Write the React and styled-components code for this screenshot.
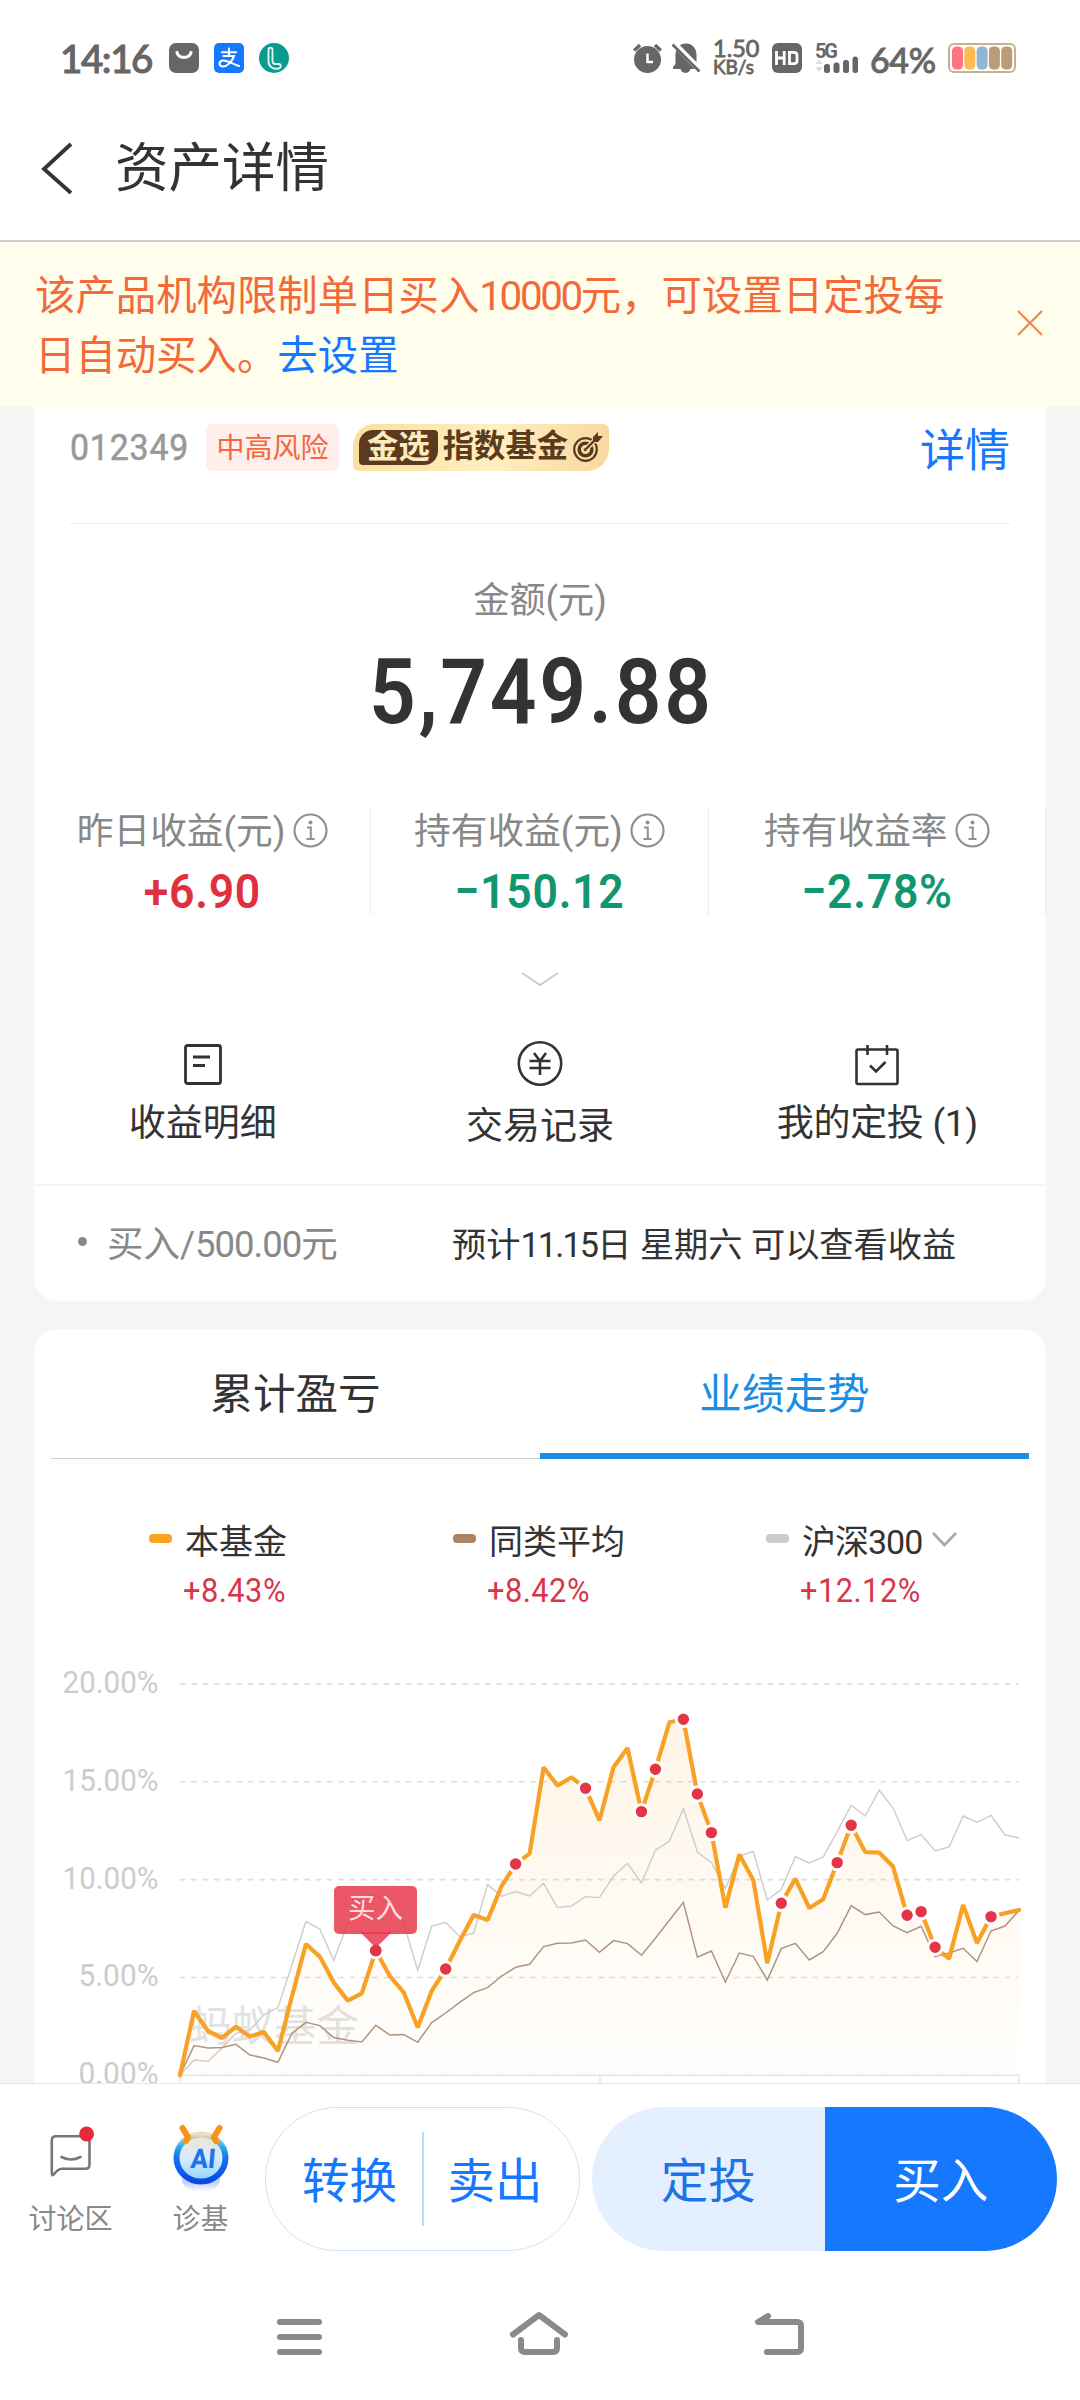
import React from 'react';
import styled, { createGlobalStyle } from 'styled-components';

const GlobalStyle = createGlobalStyle`
  * {
    box-sizing: border-box;
  }
  body {
    margin: 0;
    background: #fff;
    font-family: Roboto, 'Noto Sans CJK SC', sans-serif;
    color: #333;
  }
  svg {
    display: block;
    flex: none;
  }
`;

const Screen = styled.div`
  width: 1080px;
  height: 2400px;
  display: flex;
  flex-direction: column;
  overflow: hidden;
  background: #fff;
  white-space: nowrap;
`;

/* status bar */

const StatusBar = styled.div`
  height: 95px;
  padding: 20px 64px 0 60px;
  display: flex;
  align-items: center;
  color: #666;
  font-family: Lato, sans-serif;
`;

const Clock = styled.div`
  width: 109px;
  font-size: 38.5px;
  font-weight: 500;
  line-height: 38px;
  letter-spacing: -1.4px;
  -webkit-text-stroke: 1px #666;
`;

const AppIcons = styled.div`
  display: flex;
  gap: 15px;
  flex: 1;
`;

const StatusGroup = styled.div`
  display: flex;
  align-items: center;
`;

const NetSpeed = styled.div`
  width: 69px;
  padding-left: 10px;
  font-size: 23.5px;
  line-height: 18px;
  -webkit-text-stroke: 0.8px #666;
  span {
    display: block;
    font-size: 19px;
    line-height: 19px;
  }
`;

const Battery = styled.div`
  width: 89px;
  padding: 4px 0 0 11px;
  font-size: 34px;
  font-weight: 500;
  line-height: 34px;
  letter-spacing: -0.4px;
  -webkit-text-stroke: 0.8px #666;
`;

/* header */

const Header = styled.div`
  height: 147px;
  padding: 0 0 0 40px;
  display: flex;
  align-items: center;
  gap: 41px;
  border-bottom: 2px solid #cfcfcf;
`;

const Title = styled.div`
  padding-top: 3px;
  font-size: 53.5px;
  line-height: 60px;
`;

const Notice = styled.div`
  height: 165px;
  padding: 25px 37px 0 35px;
  display: flex;
  justify-content: space-between;
  background: #fffdec;
  color: #f26a3a;
  font-size: 40.4px;
  line-height: 60px;
  svg {
    margin-top: 43px;
  }
`;

const Condensed = styled.span`
  letter-spacing: ${(p) => p.$by || -1}px;
`;

const Link = styled.span`
  color: #1677ff;
`;

/* page body */

const Body = styled.div`
  height: 1676px;
  padding: 0 34px;
  overflow: hidden;
  background: #f5f5f5;
`;

const Card = styled.div`
  background: #fff;
  border-radius: ${(p) => (p.$top ? '24px 24px 0 0' : '0 0 24px 24px')};
  margin-bottom: 28px;
`;

const FundRow = styled.div`
  height: 117px;
  margin: 0 36px;
  padding-bottom: 36px;
  display: flex;
  align-items: center;
  border-bottom: 1px solid #ececec;
`;

const FundCode = styled.div`
  width: 136px;
  font-size: 37.5px;
  color: #999;
  letter-spacing: 1px;
  transform: scaleX(0.9);
  transform-origin: left;
  -webkit-text-stroke: 0.6px #999;
`;

const RiskTag = styled.div`
  width: 133px;
  height: 47px;
  border-radius: 6px;
  background: #ffeeeb;
  color: #f2683a;
  font-size: 28px;
  line-height: 49px;
  text-align: center;
`;

const GoldBadge = styled.div`
  width: 256px;
  height: 47px;
  margin-left: 14px;
  padding: 0 6px;
  display: flex;
  align-items: center;
  gap: 5px;
  border-radius: 22px 6px 22px 6px;
  background: linear-gradient(100deg, #fbdf9e, #ffefc0 55%, #f9d79d);
  color: #5b3a20;
  font-size: 31.3px;
  line-height: 44px;
  font-weight: 700;
`;

const GoldMark = styled.span`
  width: 79px;
  height: 35px;
  border-radius: 14px 4px 14px 4px;
  background: #5b3a20;
  color: #fdebbd;
  line-height: 35px;
  text-align: center;
`;

const DetailLink = styled.div`
  margin-left: auto;
  color: #1677ff;
  font-size: 45px;
`;

const AmountLabel = styled.div`
  margin-top: 52px;
  font-size: 36.2px;
  line-height: 50px;
  text-align: center;
  color: #888;
`;

const Amount = styled.div`
  margin-top: 21px;
  padding-left: 3px;
  font-size: 91px;
  font-weight: 600;
  line-height: 90px;
  letter-spacing: 3px;
  text-align: center;
  transform: scaleX(0.9);
`;

const Stats = styled.div`
  height: 104px;
  margin-top: 72px;
  display: grid;
  grid-template-columns: repeat(3, 1fr);
`;

const Stat = styled.div`
  padding-top: 3px;
  border-right: 1px solid #ececec;
  display: flex;
  flex-direction: column;
  align-items: center;
`;

const StatLabel = styled.div`
  display: flex;
  align-items: center;
  gap: 7px;
  font-size: 36.7px;
  line-height: 40px;
  color: #888;
  svg {
    margin-top: -4px;
  }
`;

const StatValue = styled.div`
  margin-top: 17px;
  font-size: 49px;
  font-weight: 600;
  line-height: 46px;
  letter-spacing: 0.8px;
  transform: scaleX(0.91);
  color: ${(p) => (p.$up ? '#e0303f' : '#109770')};
`;

const Expander = styled.div`
  margin-top: 59px;
  display: flex;
  justify-content: center;
`;

const Actions = styled.div`
  height: 143px;
  margin-top: 54px;
  display: grid;
  grid-template-columns: repeat(3, 1fr);
`;

const Action = styled.div`
  display: flex;
  flex-direction: column;
  align-items: center;
  gap: ${(p) => p.$gap || 17}px;
  font-size: 37px;
  line-height: 40px;
`;

const Pending = styled.div`
  height: 117px;
  padding: 0 0 4px 44px;
  display: flex;
  align-items: center;
  border-top: 2px solid #f5f5f5;
`;

const Bullet = styled.span`
  width: 9px;
  height: 9px;
  border-radius: 50%;
  background: #888;
`;

const PendingName = styled.div`
  width: 365px;
  padding-left: 20px;
  font-size: 36.5px;
  color: #888;
`;

const PendingNote = styled.div`
  font-size: 34.2px;
`;

/* performance card */

const Tabs = styled.div`
  height: 130px;
  margin: 0 17px;
  display: grid;
  grid-template-columns: 1fr 1fr;
`;

const Tab = styled.div`
  display: flex;
  justify-content: center;
  font-size: 42.6px;
  line-height: 130px;
  color: ${(p) => (p.$active ? '#1a8ee2' : '#333')};
  box-shadow: inset 0 ${(p) => (p.$active ? '-6px #1a8ee2' : '-1px #d0d0d0')};
`;

const Legend = styled.div`
  margin-top: 62px;
  padding-left: 115px;
  display: grid;
  grid-template-columns: 304px 313px auto;
`;

const LegendName = styled.div`
  display: flex;
  align-items: center;
  gap: 13px;
  font-size: 34px;
  line-height: 42px;
  height: 41px;
  &::before {
    content: '';
    width: 23px;
    height: 9px;
    margin-bottom: 6px;
    border-radius: 4px;
    background: ${(p) => p.$color};
  }
  svg {
    margin: 0 0 4px -3px;
  }
`;

const LegendValue = styled.div`
  margin-top: 9px;
  margin-left: 34px;
  font-size: 33.5px;
  line-height: 40px;
  letter-spacing: 0.5px;
  transform: scaleX(0.92);
  transform-origin: left;
  color: #d9364a;
`;

const ChartSvg = styled.svg`
  margin-top: 9px;
  font-size: 31px;
`;

/* bottom bar */

const BottomBar = styled.div`
  height: 169px;
  padding: 23px 23px 0 0;
  display: flex;
  border-top: 1px solid #e6e6e6;
`;

const Shortcut = styled.div`
  width: ${(p) => p.$width}px;
  display: flex;
  flex-direction: column;
  align-items: center;
  justify-content: space-between;
  padding: 14px 0 12px;
  font-size: 28px;
  line-height: 40px;
  color: #888;
`;

const OutlinePill = styled.div`
  width: 315px;
  height: 144px;
  margin: 0 12px 0 5px;
  display: flex;
  align-items: center;
  border: 1px solid #cfe2fa;
  border-radius: 72px;
  color: #1677ff;
  font-size: 47.500px;
`;

const PillItem = styled.div`
  flex: 1;
  height: 94px;
  line-height: 100px;
  text-align: center;
  & + & {
    padding-right: 13px;
    border-left: 2px solid #bdd8fb;
  }
  &:first-child {
    flex: none;
    width: 156px;
    padding-left: 11px;
  }
`;

const SolidPill = styled.div`
  flex: 1;
  height: 144px;
  display: flex;
  border-radius: 72px;
  overflow: hidden;
  font-size: 47.500px;
  line-height: 151px;
  text-align: center;
`;

const SolidItem = styled.div`
  flex: 1;
  background: ${(p) => (p.$primary ? '#1677ff' : '#e4efff')};
  color: ${(p) => (p.$primary ? '#fff' : '#1c74e6')};
`;

const NavBar = styled.div`
  flex: 1;
  padding: 58px 272px 0 274px;
  display: flex;
  justify-content: space-between;
`;

/* icons */

const BagIcon = () => (
  <svg width="30" height="30">
    <rect width="30" height="30" rx="7" fill="#666" />
    <path d="M8 9.5c1.5 6.500 12.500 6.500 14 0" fill="none" stroke="#fff" strokeWidth="3.200" strokeLinecap="round" />
  </svg>
);

const PayIcon = () => (
  <svg width="30" height="30" fill="none" stroke="#fff" strokeLinecap="round">
    <rect width="30" height="30" rx="5" fill="#1677ff" stroke="none" />
    <path d="M8 9.200h14M15 5.500v7.500M9.500 13h10.500c-1.500 5-6.500 10.500-11 10.500c-5 0-4.500-6 0.500-6c4.500 0 9 3.500 15.500 5.500" strokeWidth="2.100" />
  </svg>
);

const CallIcon = () => (
  <svg width="30" height="30" fill="none" stroke="#dff5f2" strokeWidth="1.900">
    <circle cx="15" cy="15" r="15" fill="#0a9b90" stroke="none" />
    <path d="M9.500 7c0-3 4-3 4 0v11c0 2 1 3 3 3h3c3 0 3 4 0 4.500c-6 1-10-2-10-7z" />
  </svg>
);

const AlarmIcon = () => (
  <svg width="29" height="30" fill="none" stroke="#666">
    <circle cx="14.500" cy="16.500" r="13.500" fill="#666" stroke="none" />
    <path d="M1.200 7.500L7 2M27.800 7.500L22 2" strokeWidth="3.400" />
    <path d="M14.500 10.500v8.500h5.500" stroke="#fff" strokeWidth="2.400" />
  </svg>
);

const MuteIcon = () => (
  <svg width="41" height="30">
    <path d="M11 26v-2l2.500-3v-9C13.500 5 18 0.500 24 0.500S34.500 5 34.500 12v9l2.500 3v2z" fill="#666" />
    <path d="M18.500 25h10a5 5 0 0 1-10 0z" fill="#666" />
    <path d="M11.500 0L39 28" stroke="#fff" strokeWidth="6" />
    <path d="M10.500 1.500L37.500 28.500" stroke="#666" strokeWidth="2.600" />
  </svg>
);

const HdIcon = () => (
  <svg width="30" height="30" fill="none" stroke="#fff" strokeWidth="2.800">
    <rect width="30" height="30" rx="6" fill="#666" stroke="none" />
    <path d="M4.500 8v14M12.200 8v14M4.500 15h8M17.500 9.300h4.500q3 0 3 3v5.400q0 3-3 3h-4.500z" />
  </svg>
);

const SignalIcon = () => (
  <svg width="57" height="40" viewBox="0 -4 57 40">
    <text x="13" y="15.500" fontSize="20" fontWeight="700" fill="#666" textLength="23" fontFamily="Roboto, sans-serif">5G</text>
    <path d="M13 22l4-4 4 4zM13 25l4 5 4-5z" fill="#ddd" />
    <g fill="#666">
      <rect x="22" y="22" width="6" height="9" rx="2.500" />
      <rect x="31.500" y="20.500" width="6" height="10.500" rx="2.500" />
      <rect x="41" y="18" width="6" height="13" rx="2.500" />
      <rect x="50.500" y="14.500" width="5.500" height="16.500" rx="2.500" />
    </g>
  </svg>
);

const BatteryIcon = () => (
  <svg width="68" height="30">
    <rect x="1" y="1" width="66" height="28" rx="5" fill="#fff" stroke="#c9b08c" strokeWidth="2" />
    {['#ff7480', '#fbbd52', '#93b4d2', '#bb9b78', '#bb9b78'].map((color, i) => (
      <rect key={i} x={4 + i * 12.3} y="3.500" width="11" height="23" rx="4.500" fill={color} />
    ))}
  </svg>
);

const BackIcon = () => (
  <svg width="34" height="52" fill="none" stroke="#333" strokeWidth="3.800">
    <path d="M31 2L4 27l27 24" />
  </svg>
);

const CloseIcon = () => (
  <svg width="26" height="26" stroke="#ea8a50" strokeWidth="2.200">
    <path d="M1 1l24 24M25 1L1 25" />
  </svg>
);

const TargetIcon = () => (
  <svg width="30" height="32" fill="none" stroke="#5b3a20" strokeWidth="2.200">
    <circle cx="12.500" cy="18.500" r="11.300" />
    <circle cx="12.500" cy="18.500" r="6.300" strokeWidth="3.600" />
    <circle cx="12.500" cy="18.500" r="1.800" fill="#5b3a20" stroke="none" />
    <path d="M12.500 18.500L23 8" stroke="#fbe3ae" strokeWidth="5" />
    <path d="M12.500 18.500L24 7" strokeWidth="2.400" />
    <path d="M20 6l5-5v4l5 0-5 6h-5z" fill="#5b3a20" stroke="none" />
  </svg>
);

const InfoIcon = () => (
  <svg width="35" height="35" fill="none" stroke="#909090" strokeWidth="2.200">
    <circle cx="17.500" cy="17.500" r="16" />
    <circle cx="17.500" cy="9.500" r="2" fill="#909090" stroke="none" />
    <path d="M14 14.500h3.800v11M13.500 26h8" strokeWidth="2" />
  </svg>
);

const ChevronDown = ({ width = 38, height = 15, color = '#ccc', stroke = 2 }) => (
  <svg width={width} height={height} fill="none" stroke={color} strokeWidth={stroke}>
    <path d={`M1 1L${width / 2} ${height - 2}L${width - 1} 1`} />
  </svg>
);

const ReceiptIcon = () => (
  <svg width="46" height="46" fill="none" stroke="#333" strokeWidth="2.800">
    <rect x="5.500" y="4.500" width="35" height="38" rx="2" />
    <path d="M13 16h17M13 24.500h12" />
  </svg>
);

const YenIcon = () => (
  <svg width="46" height="46" fill="none" stroke="#333" strokeWidth="2.600">
    <circle cx="23" cy="22.500" r="21.200" />
    <path d="M17 12l6 8 6-8M12.500 20h21M12.500 27h21M23 20v14" />
  </svg>
);

const CalendarIcon = () => (
  <svg width="46" height="46" fill="none" stroke="#333" strokeWidth="2.600">
    <rect x="2.500" y="8.500" width="41" height="34.500" rx="1.500" />
    <path d="M13.500 4v10M33 4v10M16 24.500l6 6 9.500-9.500" />
  </svg>
);

const DiscussIcon = () => (
  <svg width="52" height="58" fill="none" stroke="#777" strokeWidth="2.600" strokeLinejoin="round">
    <path d="M11 15.300h29.500q4 0 4 4v24.400q0 4-4 4H17q-4 0-8 5.500q-2.200 2.500-2.200-1V19.300q0-4 4.200-4z" />
    <path d="M16.500 36q9.500 5 19 0" strokeLinecap="round" />
    <circle cx="41.600" cy="13" r="7.400" fill="#e6293b" stroke="none" />
  </svg>
);

const AiIcon = () => (
  <svg width="60" height="76" fill="none">
    <defs>
      <linearGradient id="ring" x1="0" y1="0" x2="0" y2="1">
        <stop offset="0" stopColor="#f0dcbc" />
        <stop offset="0.250" stopColor="#35aee6" />
        <stop offset="0.500" stopColor="#1673f2" />
        <stop offset="1" stopColor="#0a48e8" />
      </linearGradient>
      <linearGradient id="face" x1="0" y1="0" x2="0" y2="1">
        <stop offset="0" stopColor="#f3e4cc" />
        <stop offset="0.500" stopColor="#d6ecfb" />
        <stop offset="1" stopColor="#8fd2ff" />
      </linearGradient>
      <linearGradient id="shade" x1="0" y1="0" x2="0" y2="1">
        <stop offset="0.600" stopColor="#c5cffb" />
        <stop offset="1" stopColor="#fff" />
      </linearGradient>
    </defs>
    <ellipse cx="30" cy="59" rx="19" ry="12" fill="url(#shade)" />
    <ellipse cx="30" cy="37" rx="24.500" ry="23.500" fill="url(#face)" stroke="url(#ring)" strokeWidth="6" />
    <path d="M11.500 7l5.500 9-2 4M48.500 7l-5.500 9 2 4" stroke="#fb9312" strokeWidth="6" strokeLinecap="round" strokeLinejoin="round" />
    <text x="19" y="47" fontSize="27" fontWeight="800" fill="#1d74f0" textLength="25" lengthAdjust="spacingAndGlyphs" transform="translate(4 0) skewX(-5)">AI</text>
  </svg>
);

const MenuIcon = () => (
  <svg width="50" height="48" stroke="#8a8a8a" strokeWidth="6" strokeLinecap="round">
    <path d="M6 12h39M6 27h39M6 42h39" />
  </svg>
);

const HomeIcon = () => (
  <svg width="60" height="48" fill="none" stroke="#8a8a8a" strokeWidth="6" strokeLinecap="round" strokeLinejoin="round">
    <path d="M4 24.500L30 5l26 19.500M12 30v8q0 4 4 4h28q4 0 4-4v-8" />
  </svg>
);

const ReturnIcon = () => (
  <svg width="54" height="48" fill="none" stroke="#8a8a8a" strokeWidth="6" strokeLinecap="round" strokeLinejoin="round">
    <path d="M14 6L4 12h39q4 0 4 4v22q0 4-4 4H13" />
  </svg>
);

/* chart data, 58.7 units to one percent */

const fund = [
  0, 193, 133, 112, 146, 116, 130, 73, 236, 394, 356, 278, 224, 246, 374, 298, 249, 143, 253, 319,
  403, 481, 466, 568, 634, 665, 924, 869, 894, 861, 765, 924, 982, 791, 918, 1059, 1068, 844, 728, 503,
  662, 586, 336, 516, 590, 502, 528, 638, 750, 670, 668, 626, 480, 491, 384, 350, 511, 397, 476, 486, 496,
];
const peers = [
  0, 89, 82, 83, 93, 61, 52, 39, 126, 159, 149, 113, 105, 100, 150, 121, 122, 99, 158, 187,
  219, 248, 263, 298, 324, 333, 386, 396, 397, 406, 369, 404, 395, 360, 411, 465, 519, 354, 373, 280,
  367, 357, 286, 380, 396, 346, 371, 426, 509, 482, 490, 448, 428, 447, 356, 367, 381, 341, 433, 448, 494,
];
const csi300 = [
  0, 46, 42, 81, 126, 136, 181, 203, 331, 461, 439, 345, 456, 536, 541, 511, 456, 315, 448, 458,
  416, 426, 572, 537, 551, 538, 576, 503, 508, 536, 533, 598, 636, 577, 675, 703, 800, 670, 638, 561,
  658, 672, 526, 558, 656, 637, 655, 731, 810, 778, 855, 802, 704, 722, 673, 685, 778, 759, 780, 721, 712,
];
const buys = [14, 19, 24, 29, 33, 34, 36, 37, 38, 43, 47, 48, 52, 53, 54, 58];
const ticks = [0, 5, 10, 15, 20];

const LEFT = 146;
const RIGHT = 985;
const BASE = 455.3;
const px = (i) => LEFT + (i * (RIGHT - LEFT)) / 60;
const py = (v) => BASE - v / 3;
const line = (data) => data.map((v, i) => `${px(i).toFixed(1)},${py(v).toFixed(1)}`).join(' ');

const Chart = () => (
  <ChartSvg width="1012" height="463" fill="none">
    <defs>
      <linearGradient id="area" x1="0" y1="0" x2="0" y2="1">
        <stop offset="0" stopColor="#f9a01f" stopOpacity="0.110" />
        <stop offset="1" stopColor="#f9a01f" stopOpacity="0.010" />
      </linearGradient>
    </defs>
    <text x="155" y="421" fontSize="42.500" fill="#e2e2e2">蚂蚁基金</text>
    {ticks.map((t) => (
      <g key={t}>
        <text
          x="124.500"
          y={BASE - t * 19.57 + 9}
          textAnchor="end"
          fill="#ccc"
          textLength={t < 10 ? 80 : 96}
          lengthAdjust="spacingAndGlyphs"
        >
          {t.toFixed(2)}%
        </text>
        <path d={`M${LEFT} ${BASE - t * 19.57}H${RIGHT}`} stroke="#dedede" strokeWidth="1.600" strokeDasharray="5.500 5.800" />
      </g>
    ))}
    <path d={`M${LEFT} ${BASE}H${RIGHT}M${LEFT} ${BASE}v8M566 ${BASE}v8M${RIGHT} ${BASE}v8`} stroke="#e2e2e2" strokeWidth="1.300" />
    <polygon points={`${line(fund)} ${RIGHT},${BASE} ${LEFT},${BASE}`} fill="url(#area)" />
    <polyline points={line(csi300)} stroke="#ccc" strokeWidth="1.400" />
    <polyline points={line(peers)} stroke="#b09480" strokeWidth="1.500" />
    <polyline points={line(fund)} stroke="#f9a125" strokeWidth="4.200" strokeLinejoin="bevel" strokeLinecap="round" />
    {buys.map((i) => (
      <circle key={i} cx={px(i)} cy={py(fund[i])} r="7.200" fill="#e33546" stroke="#fff" strokeWidth="3" />
    ))}
    <g transform="translate(300 266)">
      <rect width="83" height="48" rx="5" fill="#e83a4c" fillOpacity="0.850" />
      <path d="M26 46h32L41.800 62z" fill="#e83a4c" fillOpacity="0.850" />
      <circle cx="41.800" cy="64.500" r="5.700" fill="#e33546" />
      <text x="14" y="32" fontSize="27.500" fill="#ffdde0">买入</text>
    </g>
  </ChartSvg>
);

const App = () => (
  <Screen>
    <GlobalStyle />
    <StatusBar>
      <Clock>14:16</Clock>
      <AppIcons>
        <BagIcon />
        <PayIcon />
        <CallIcon />
      </AppIcons>
      <StatusGroup>
        <AlarmIcon />
        <MuteIcon />
        <NetSpeed>
          1.50
          <span>KB/s</span>
        </NetSpeed>
        <HdIcon />
        <SignalIcon />
        <Battery>64%</Battery>
        <BatteryIcon />
      </StatusGroup>
    </StatusBar>
    <Header>
      <BackIcon />
      <Title>资产详情</Title>
    </Header>
    <Notice>
      <div>
        该产品机构限制单日买入<Condensed $by={-2.4}>10000</Condensed>元，可设置日定投每
        <br />
        日自动买入。<Link>去设置</Link>
      </div>
      <CloseIcon />
    </Notice>
    <Body>
      <Card>
        <FundRow>
          <FundCode>012349</FundCode>
          <RiskTag>中高风险</RiskTag>
          <GoldBadge>
            <GoldMark>金选</GoldMark>
            指数基金
            <TargetIcon />
          </GoldBadge>
          <DetailLink>详情</DetailLink>
        </FundRow>
        <AmountLabel>金额(元)</AmountLabel>
        <Amount>5,749.88</Amount>
        <Stats>
          <Stat>
            <StatLabel>昨日收益(元)<InfoIcon /></StatLabel>
            <StatValue $up>+6.90</StatValue>
          </Stat>
          <Stat>
            <StatLabel>持有收益(元)<InfoIcon /></StatLabel>
            <StatValue>−150.12</StatValue>
          </Stat>
          <Stat>
            <StatLabel>持有收益率<InfoIcon /></StatLabel>
            <StatValue>−2.78%</StatValue>
          </Stat>
        </Stats>
        <Expander>
          <ChevronDown />
        </Expander>
        <Actions>
          <Action>
            <ReceiptIcon />
            收益明细
          </Action>
          <Action $gap={20}>
            <YenIcon />
            交易记录
          </Action>
          <Action>
            <CalendarIcon />
            <Condensed $by={-0.3}>我的定投 (1)</Condensed>
          </Action>
        </Actions>
        <Pending>
          <Bullet />
          <PendingName>买入/<Condensed>500.00</Condensed>元</PendingName>
          <PendingNote>预计<Condensed $by={-1.8}>11.15</Condensed>日 星期六 可以查看收益</PendingNote>
        </Pending>
      </Card>
      <Card $top>
        <Tabs>
          <Tab>累计盈亏</Tab>
          <Tab $active>业绩走势</Tab>
        </Tabs>
        <Legend>
          <div>
            <LegendName $color="#fba31f">本基金</LegendName>
            <LegendValue>+8.43%</LegendValue>
          </div>
          <div>
            <LegendName $color="#ab8465">同类平均</LegendName>
            <LegendValue>+8.42%</LegendValue>
          </div>
          <div>
            <LegendName $color="#ccc">
              <Condensed>沪深300</Condensed>
              <ChevronDown width={25} height={15} color="#aaa" stroke={2.8} />
            </LegendName>
            <LegendValue>+12.12%</LegendValue>
          </div>
        </Legend>
        <Chart />
      </Card>
    </Body>
    <BottomBar>
      <Shortcut $width={141}>
        <DiscussIcon />
        讨论区
      </Shortcut>
      <Shortcut $width={119}>
        <AiIcon />
        诊基
      </Shortcut>
      <OutlinePill>
        <PillItem>转换</PillItem>
        <PillItem>卖出</PillItem>
      </OutlinePill>
      <SolidPill>
        <SolidItem>定投</SolidItem>
        <SolidItem $primary>买入</SolidItem>
      </SolidPill>
    </BottomBar>
    <NavBar>
      <MenuIcon />
      <HomeIcon />
      <ReturnIcon />
    </NavBar>
  </Screen>
);

export default App;
